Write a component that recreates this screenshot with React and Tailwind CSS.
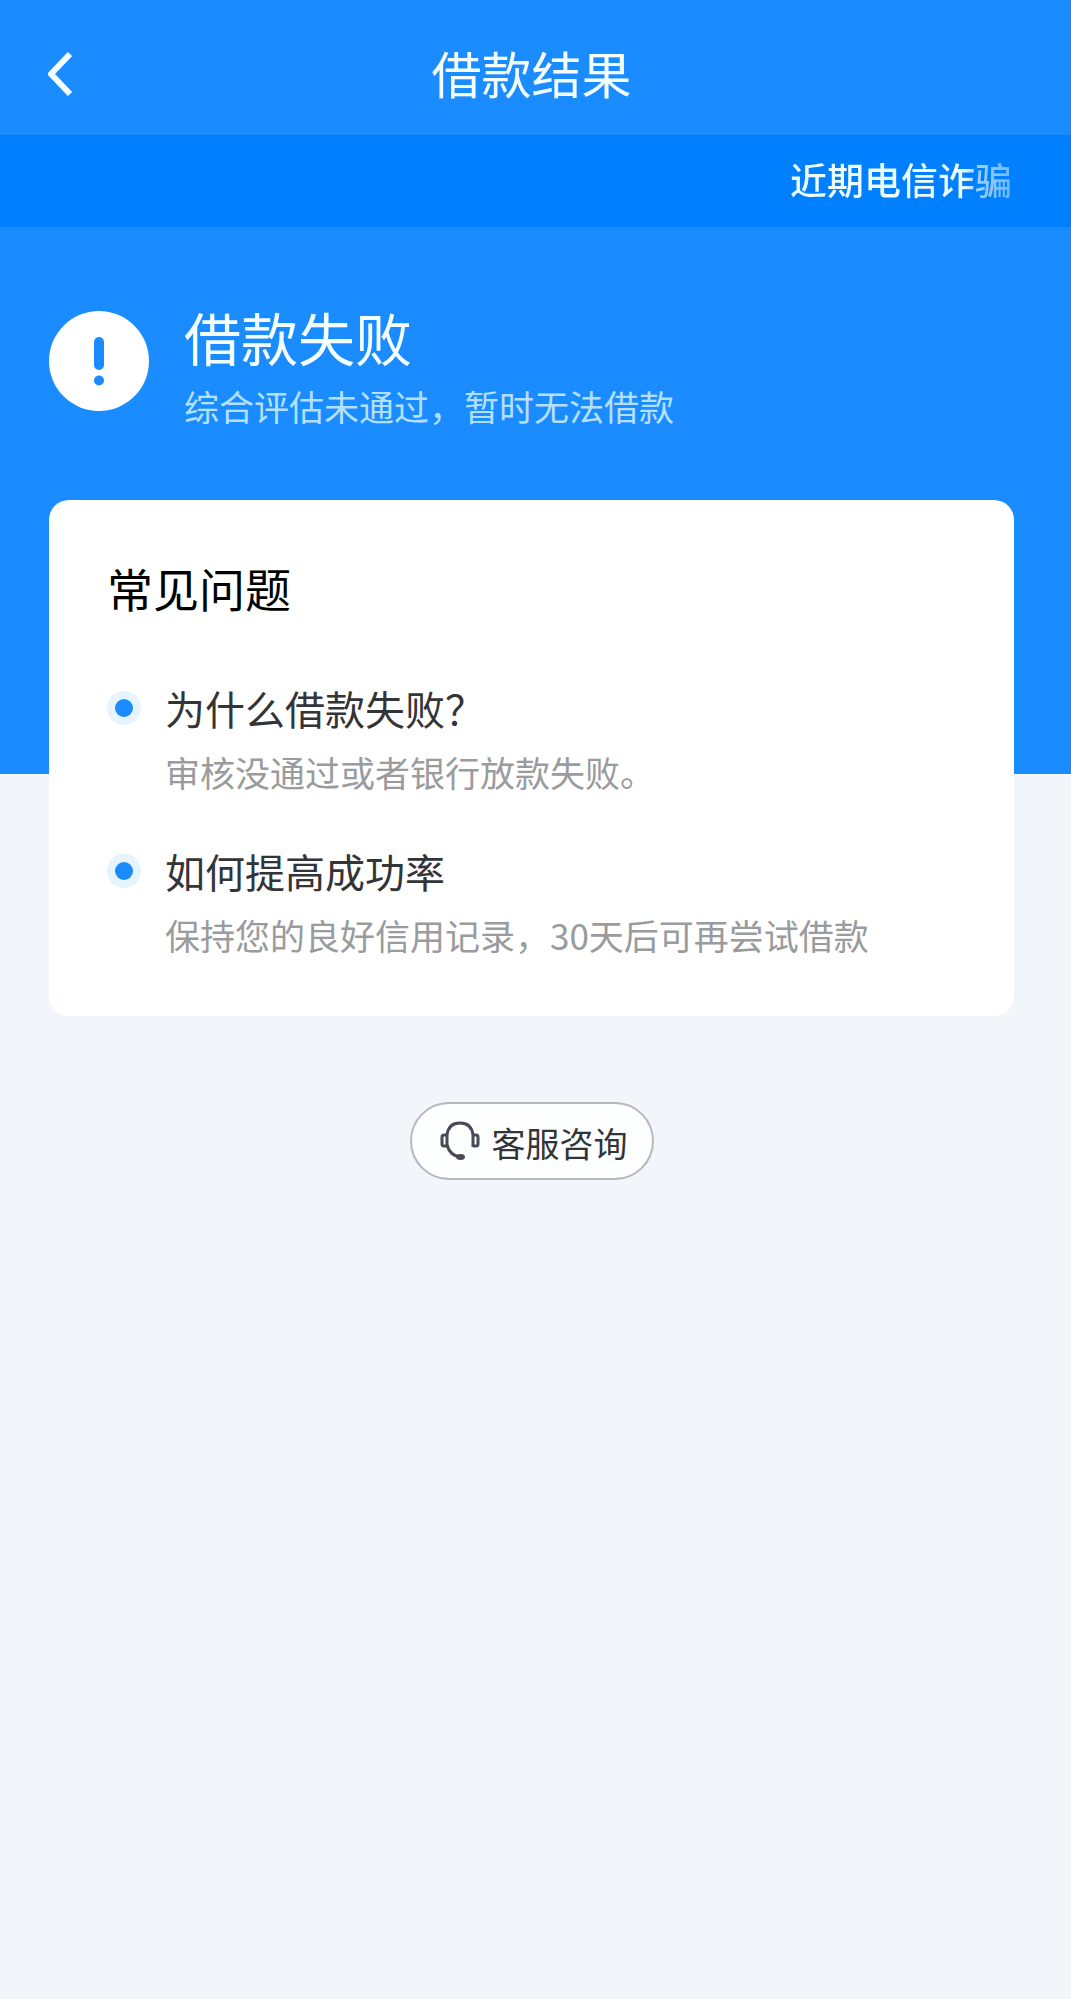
import React from "react";

const questions = [
  {
    title: "为什么借款失败？",
    answer: "审核没通过或者银行放款失败。",
  },
  {
    title: "如何提高成功率",
    answer: "保持您的良好信用记录，30天后可再尝试借款",
  },
];

function BackIcon() {
  return (
    <svg width="26" height="46" viewBox="0 0 26 46" fill="none" aria-hidden="true">
      <path d="M22 3 L3 23 L22 43" stroke="#f4feff" strokeWidth="6" strokeLinejoin="round" />
    </svg>
  );
}

function AlertIcon() {
  return (
    <svg className="mt-3 shrink-0" width="100" height="100" viewBox="0 0 100 100" aria-hidden="true">
      <circle cx="50" cy="50" r="50" fill="#fff" />
      <rect x="45" y="26" width="10" height="33" rx="5" fill="#1a8cff" />
      <circle cx="50" cy="69.500" r="5" fill="#1a8cff" />
    </svg>
  );
}

function HeadsetIcon() {
  return (
    <svg width="40" height="40" viewBox="0 0 40 40" fill="none" stroke="#474b57" aria-hidden="true">
      <path d="M7 26 V14 C8 6 13 2 20 2 C27 2 32 6 33 14 V26" strokeWidth="3" />
      <path d="M7 24 C9 31 13 35 20 36" strokeWidth="3" />
      <path d="M7 14 H4 Q2 14 2 16 V23 Q2 25 4 25 H7" strokeWidth="3" />
      <path d="M33 14 H36 Q38 14 38 16 V23 Q38 25 36 25 H33" strokeWidth="3" />
      <ellipse cx="20.500" cy="36" rx="4.500" ry="3" fill="#474b57" stroke="none" />
    </svg>
  );
}

function QuestionItem({ title, answer }) {
  return (
    <li className="flex gap-6">
      <span className="mt-3 flex size-[34px] shrink-0 items-center justify-center rounded-full bg-[#e6f4fd]">
        <span className="size-[18px] rounded-full bg-[#1a8cff]" />
      </span>
      <div>
        <h3 className="text-[40px] leading-[58px] text-[#333437]">{title}</h3>
        <p className="text-[35px] leading-[70px] text-[#999b9d]">{answer}</p>
      </div>
    </li>
  );
}

export default function App() {
  return (
    <div className="min-h-screen bg-[#f2f5fa] font-['Noto_Sans_CJK_SC',sans-serif]">
      <header className="grid h-[135px] grid-cols-[1fr_auto_1fr] items-center bg-[#1a8cff] pt-2 pr-14 pl-12">
        <button type="button" aria-label="返回" className="justify-self-start pt-1">
          <BackIcon />
        </button>
        <h1 className="text-[50px] leading-[66px] text-[#f4feff]">借款结果</h1>
      </header>

      <div className="flex h-[92px] items-center justify-end bg-[#007fff] pr-[59px] pb-1">
        <p className="bg-[linear-gradient(90deg,#eefdff_78%,#9fd2ff_84%,#6bb6ff_100%)] bg-clip-text text-[37px] leading-[60px] font-medium text-transparent">
          近期电信诈骗
        </p>
      </div>

      <section className="flex gap-[35px] bg-[#1a8cff] pt-[72px] pr-[57px] pb-[335px] pl-[49px]">
        <AlertIcon />
        <div>
          <h2 className="text-[57px] leading-[74px] text-[#f4feff]">借款失败</h2>
          <p className="text-[35px] leading-[66px] text-[#b4e0ff]">综合评估未通过，暂时无法借款</p>
        </div>
      </section>

      {/* 卡片上半部分压在蓝色背景上 */}
      <main className="-mt-[274px] flex flex-col items-center pr-[57px] pl-[49px]">
        <section className="w-full rounded-[20px] bg-white px-[58px] pt-[58px] pb-[46px]">
          <h2 className="text-[46px] leading-[58px] text-black">常见问题</h2>
          <ul className="mt-[63px] flex flex-col gap-[35px]">
            {questions.map((item) => (
              <QuestionItem key={item.title} title={item.title} answer={item.answer} />
            ))}
          </ul>
        </section>

        <button
          type="button"
          className="mt-[86px] flex h-[78px] items-center gap-3 rounded-full border-2 border-[#b6b7c0] bg-[#fdfefe] pr-6 pl-7 text-[34px] leading-[58px] text-[#333437]"
        >
          <HeadsetIcon />
          <span className="pt-1">客服咨询</span>
        </button>
      </main>
    </div>
  );
}
